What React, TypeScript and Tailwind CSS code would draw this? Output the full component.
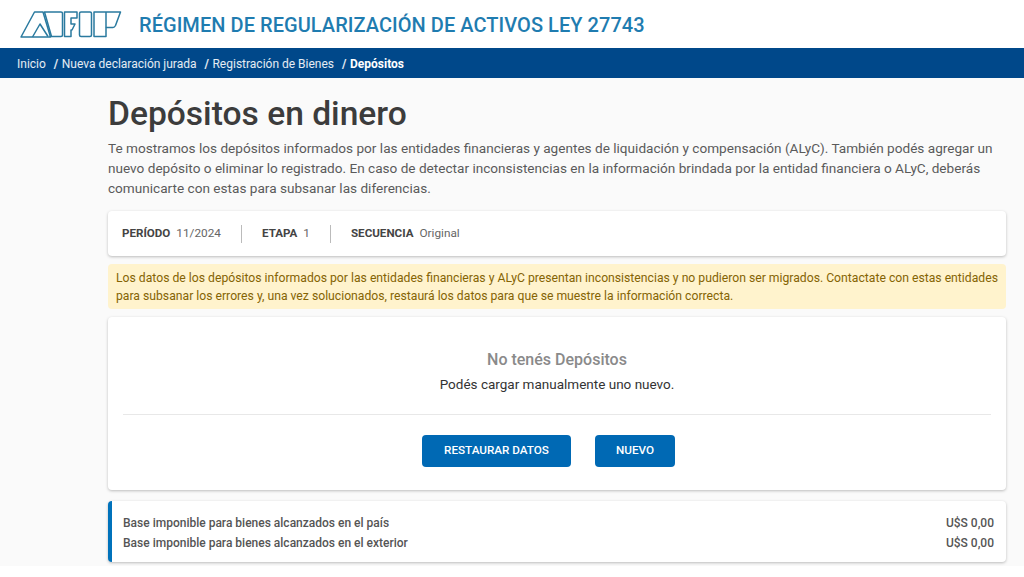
import React from 'react';

const Logo = () => (
  <svg width="102" height="28" viewBox="0 0 102 28" fill="none" stroke="#2a7a9f" strokeWidth="1.5" strokeLinejoin="round">
    <path d="M1 27 L14.5 2 L23 2 L30.5 27 L1 27 Z" />
    <path d="M12.5 27 L20 14 L28 26.5" />
    <path d="M24.5 2 L41 2 C42 2 42.5 2.5 42.5 3.5 L42.5 25 C42.5 26 42 26.5 41 26.5 L31.5 26.5 Z" />
    <path d="M44.5 2 L57 2 L57 8 L51 8 L51 14 L55 14 L52 20 L51 20 L51 26.5 L44.5 26.5 Z" />
    <rect x="59.5" y="2" width="12" height="24.5" rx="1.5" />
    <path d="M74 2 L100.5 2 L95.5 15.5 C95 16.5 94 17.5 93 17.5 L86 17.5 L86 26.5 L74 26.5 Z" />
    <path d="M86 2 L86 17.5" />
  </svg>
);

const crumbs = ['Inicio', 'Nueva declaración jurada', 'Registración de Bienes'];

const App = () => {
  return (
    <div className="w-[1024px] h-[577px] overflow-hidden bg-white font-['Roboto',sans-serif] text-[#444]">
      <header className="h-12 bg-white flex items-center pl-5">
        <Logo />
        <h1 className="ml-[17px] pt-[2px] text-[20px] leading-none font-medium tracking-[0.05px] text-[#1f7cb0]">
          RÉGIMEN DE REGULARIZACIÓN DE ACTIVOS LEY 27743
        </h1>
      </header>

      <nav className="h-[30px] bg-[#00488a] flex items-center pl-[17px] pt-[1px] text-[12px] text-white/90">
        {crumbs.map((c, i) => (
          <span key={i} className="mr-[3.5px]">
            {c}
            <span className="ml-[8px] font-bold">/</span>
          </span>
        ))}
        <span className="font-bold text-white">Depósitos</span>
      </nav>

      <div className="h-[488px] bg-[#fafafa] overflow-hidden">
        <main className="ml-[108px] w-[898px]">
          <h2 className="mt-[16px] text-[33.6px] leading-[40px] font-medium text-[#3c3c3c]">Depósitos en dinero</h2>
          <p className="mt-[4px] text-[13.6px] leading-[20px] text-[#5a5a5a] w-[885px]">
            Te mostramos los depósitos informados por las entidades financieras y agentes de liquidación y compensación (ALyC). También podés agregar un nuevo depósito o eliminar lo registrado. En caso de detectar inconsistencias en la información brindada por la entidad financiera o ALyC, deberás comunicarte con estas para subsanar las diferencias.
          </p>

          <section className="mt-[13px] h-[45px] bg-white rounded shadow-[0_1px_3px_rgba(0,0,0,0.25)] flex items-center pl-[14px] pt-[1px] text-[11.6px]">
            <b className="font-bold text-[#444]">PERÍODO</b>
            <span className="ml-[6px] text-[11.8px] text-[#666]">11/2024</span>
            <span className="mx-[20px] w-px h-[18px] bg-[#bbb]" />
            <b className="font-bold text-[#444]">ETAPA</b>
            <span className="ml-[6px] text-[11.8px] text-[#666]">1</span>
            <span className="mx-[20px] w-px h-[18px] bg-[#bbb]" />
            <b className="font-bold text-[#444]">SECUENCIA</b>
            <span className="ml-[6px] text-[11.8px] text-[#666]">Original</span>
          </section>

          <div className="mt-[8px] h-[45px] bg-[#fff3cd] rounded-sm px-2 py-[5px] text-[12.2px] leading-[18px] text-[#856404]">
            Los datos de los depósitos informados por las entidades financieras y ALyC presentan inconsistencias y no pudieron ser migrados. Contactate con estas entidades para subsanar los errores y, una vez solucionados, restaurá los datos para que se muestre la información correcta.
          </div>

          <section className="mt-[8px] h-[173px] bg-white rounded shadow-[0_1px_3px_rgba(0,0,0,0.25)] flex flex-col items-center pt-[33px]">
            <h3 className="text-[16px] leading-[20px] font-medium text-[#8a8a8a]">No tenés Depósitos</h3>
            <p className="mt-[5px] text-[13.5px] leading-[18px] text-[#333]">Podés cargar manualmente uno nuevo.</p>
            <hr className="mt-[21px] w-[868px] border-[#e8e8e8]" />
            <div className="mt-[20px] flex gap-[24px] pr-[17px]">
              <button className="h-8 w-[149px] bg-[#0069b4] rounded text-white text-[11.7px] font-medium">RESTAURAR DATOS</button>
              <button className="h-8 w-[80px] bg-[#0069b4] rounded text-white text-[11.7px] font-medium">NUEVO</button>
            </div>
          </section>

          <section className="mt-[11px] h-[61px] bg-white rounded border-l-[4px] border-[#0072bb] shadow-[0_1px_3px_rgba(0,0,0,0.25)] flex flex-col justify-center pt-[2px] pl-[11px] pr-[12px] text-[12px] leading-[20px] font-medium text-[#555]">
            <div className="flex justify-between"><span>Base imponible para bienes alcanzados en el país</span><span>U$S 0,00</span></div>
            <div className="flex justify-between"><span>Base imponible para bienes alcanzados en el exterior</span><span>U$S 0,00</span></div>
          </section>
        </main>
      </div>
    </div>
  );
};

export default App;
